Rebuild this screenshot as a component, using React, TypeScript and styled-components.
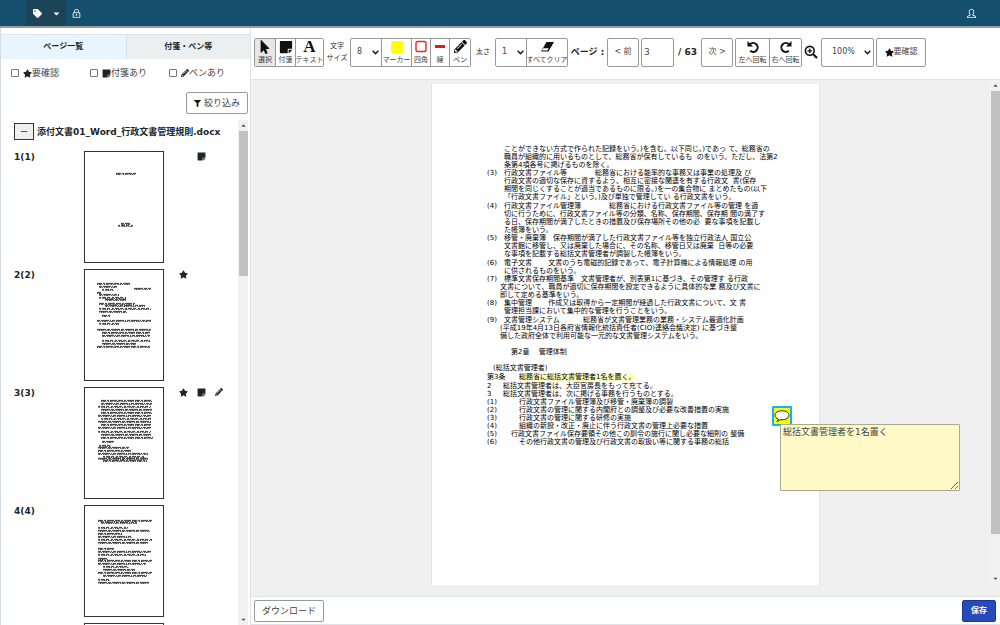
import React from 'react';
import styled, { createGlobalStyle } from 'styled-components';
import {
  FaTag,
  FaCaretDown,
  FaCaretUp,
  FaStar,
  FaStickyNote,
  FaPencilAlt,
  FaFilter,
  FaMousePointer,
} from 'react-icons/fa';
import { SlLock, SlUser } from 'react-icons/sl';

const GlobalStyle = createGlobalStyle`
  *, *::before, *::after { box-sizing: border-box; }
  body {
    margin: 0;
    background: #fff;
    color: #212529;
    font-family: "DejaVu Sans", "Noto Sans CJK JP", sans-serif;
    font-size: 9px;
    line-height: 12px;
  }
  button, input, select, textarea { font: inherit; color: inherit; margin: 0; }
  button { cursor: pointer; white-space: nowrap; }
  svg { display: block; flex: none; }
`;

const Shell = styled.div`
  height: 100vh;
  display: flex;
  flex-direction: column;
`;

const Header = styled.header`
  display: flex;
  align-items: stretch;
  flex: none;
  height: 28px;
  padding: 0 24px 0 26px;
  background: #154f6e;
  border-bottom: 2px solid #9d9c9b;
  color: #fff;
`;

const TagMenu = styled.button`
  display: flex;
  align-items: center;
  justify-content: space-between;
  width: 40px;
  padding: 0 5px 0 7px;
  border: 0;
  background: #1c4457;
  color: #fff;
`;

const HeaderButton = styled.button<{ $end?: boolean }>`
  display: flex;
  align-items: center;
  padding: 0 0 0 6px;
  margin-left: ${(p) => (p.$end ? 'auto' : 0)};
  border: 0;
  background: none;
  color: #fff;

  svg { stroke: #fff; stroke-width: 30px; }
`;

const Body = styled.div`
  flex: 1;
  min-height: 0;
  display: grid;
  grid-template-columns: 250px minmax(0, 1fr);
`;

const Sidebar = styled.aside`
  display: flex;
  flex-direction: column;
  min-height: 0;
  padding-top: 6px;
  border-left: 1px solid #d3dde2;
`;

const Tabs = styled.div`
  display: grid;
  grid-template-columns: 1fr 1fr;
  flex: none;
`;

const Tab = styled.button<{ $active?: boolean }>`
  height: 25px;
  padding: 0;
  border: 0;
  border-top: 1px solid #dfe6ea;
  border-left: ${(p) => (p.$active ? '0' : '1px solid #d5dfe5')};
  background: ${(p) => (p.$active ? '#e8f5fe' : '#ebeff0')};
  font-size: 8px;
  font-weight: 700;
`;

const Filters = styled.div`
  display: grid;
  grid-template-columns: 79px 79px 1fr;
  padding: 8px 0 0 10px;
`;

const Check = styled.label`
  display: flex;
  align-items: center;
  color: #444;

  svg { color: #222; }
`;

const CheckBox = styled.input`
  appearance: none;
  width: 8px;
  height: 8px;
  margin-right: 4px;
  border: 1px solid #777;
  border-radius: 1px;
  background: #fff;
`;

const FilterRow = styled.div`
  display: flex;
  justify-content: flex-end;
  padding: 13px 2px 6px 0;
`;

const OutlineButton = styled.button`
  display: flex;
  align-items: center;
  justify-content: center;
  gap: 3px;
  height: 22px;
  padding: 0 7px;
  border: 1px solid #999;
  border-radius: 2px;
  background: #fff;
  color: #444;
`;

const TreeArea = styled.div`
  flex: 1;
  min-height: 0;
  display: flex;
  overflow: hidden;
`;

const Tree = styled.div`
  flex: 1;
  min-width: 0;
  padding: 3px 0 0 13px;
`;

const FileRow = styled.div`
  display: flex;
  align-items: center;
  gap: 3px;
  height: 17px;
  margin-bottom: 11px;
  font-weight: 700;
  white-space: nowrap;
`;

const Collapse = styled.button`
  width: 20px;
  height: 17px;
  padding: 0;
  border: 1px solid #333;
  background: #efefef;
  line-height: 12px;
  color: #555;
`;

const PageList = styled.ol`
  display: flex;
  flex-direction: column;
  gap: 6px;
  margin: 0;
  padding: 0;
  list-style: none;
`;

const PageItem = styled.li`
  display: grid;
  grid-template-columns: 70px 80px 1fr;
  font-weight: 700;
`;

const Marks = styled.div`
  display: grid;
  grid-template-columns: repeat(3, 18px);
  justify-items: center;
  align-items: start;
  height: 12px;
  padding: 1px 0 0 10px;
`;

const Mark = styled.span<{ $col: number }>`
  grid-column: ${(p) => p.$col};
  grid-row: 1;
`;

const ThumbButton = styled.button`
  width: 80px;
  height: 112px;
  padding: 0;
  border: 1px solid #333;
  background: #fff;
`;

const Bar = styled.div`
  display: flex;
  flex-direction: column;
  align-items: center;
  width: 10px;
  flex: none;
  background: #f1f1f1;
  color: #555;
`;

const SideBar = styled(Bar)`
  margin-right: 2px;
`;

const CanvasBar = styled(Bar)`
  margin-bottom: 12px;
`;

const BarArrow = styled.div`
  flex: none;
  height: 11px;
  display: flex;
  align-items: center;
`;

const BarTrack = styled.div`
  flex: 1;
  min-height: 0;
  width: 9px;
`;

const BarThumb = styled.div<{ $share: number }>`
  height: ${(p) => p.$share}%;
  background: #c1c1c1;
`;

const Main = styled.main`
  display: flex;
  flex-direction: column;
  min-width: 0;
  min-height: 0;
  border-left: 1px solid #dfe3e6;
`;

const Toolbar = styled.div`
  display: flex;
  align-items: center;
  gap: 2px;
  flex: none;
  height: 52px;
  padding: 0 3px 3px;
  border-bottom: 1px solid #e2e2e2;
`;

const Group = styled.div`
  display: flex;
  flex: none;
  height: 29px;
  border: 1px solid #999;
  border-radius: 2px;
  overflow: hidden;
`;

const Tool = styled.button<{ $w: number; $active?: boolean }>`
  display: flex;
  flex-direction: column;
  align-items: center;
  justify-content: space-between;
  width: ${(p) => p.$w}px;
  padding: 1px 0;
  border: 0;
  border-left: 1px solid #999;
  background: ${(p) => (p.$active ? '#e6e6e6' : '#fff')};
  color: #111;
  font-size: 7px;
  line-height: 10px;

  &:first-child { border-left: 0; }
`;

const ToolText = styled.span`
  color: #444;
`;

const LetterIcon = styled.span`
  font-family: "Liberation Serif", serif;
  font-size: 17px;
  font-weight: 700;
  line-height: 14px;
`;

const SmallLabel = styled.label<{ $w: number }>`
  width: ${(p) => p.$w}px;
  flex: none;
  text-align: center;
  font-size: 7px;
  line-height: 12px;
  color: #333;
`;

const StrongLabel = styled.label<{ $w: number }>`
  width: ${(p) => p.$w}px;
  flex: none;
  font-weight: 700;
  text-align: center;
  white-space: nowrap;
`;

const SelectWrap = styled.div<{ $w: number; $framed?: boolean }>`
  display: grid;
  align-items: center;
  flex: none;
  width: ${(p) => p.$w}px;
  height: ${(p) => (p.$framed ? '29px' : 'auto')};
  border: ${(p) => (p.$framed ? '1px solid #999' : '0')};
  border-radius: 2px;

  > * { grid-area: 1 / 1; }
  > svg { justify-self: end; margin-right: 2px; pointer-events: none; }
`;

const Select = styled.select<{ $pad: number }>`
  appearance: none;
  width: 100%;
  height: 100%;
  padding: 0 0 0 ${(p) => p.$pad}px;
  border: 0;
  background: none;
  color: #444;
  font-size: 8px;
`;

const BarButton = styled.button<{ $w: number }>`
  display: flex;
  align-items: center;
  justify-content: center;
  flex: none;
  width: ${(p) => p.$w}px;
  height: 29px;
  padding: 0;
  border: 1px solid #999;
  border-radius: 2px;
  background: #fff;
  color: #444;
  font-size: 8px;

  svg { color: #111; }
`;

const PageInput = styled.input`
  flex: none;
  width: 33px;
  height: 29px;
  padding: 0 0 0 2px;
  border: 1px solid #999;
  border-radius: 2px;
  color: #444;
`;

const ZoomButton = styled.button`
  width: 15px;
  padding: 0;
  border: 0;
  background: none;
`;

const Canvas = styled.div`
  flex: 1;
  min-height: 0;
  display: flex;
  justify-content: space-between;
  background: #f0f0f0;
`;

const Stage = styled.div`
  flex: 1;
  min-width: 0;
  display: flex;
  justify-content: center;
  align-items: flex-start;
  padding: 4px 0 12px 10px;
`;

const Sheet = styled.article`
  position: relative;
  flex: none;
  width: 389px;
  min-height: 501px;
  padding: 61px 0 0 55px;
  border: solid #e3e3e3;
  border-width: 0 1px;
  background: #fff;
  color: #000;
  font-size: 7px;
  line-height: 8px;
  white-space: pre;
`;

const Sections = styled.div`
  display: flex;
  flex-direction: column;
  gap: 1px;
`;

const Clause = styled.div`
  display: grid;
  grid-template-columns: 17px 1fr;
`;

const ClauseText = styled.div<{ $wide?: boolean }>`
  grid-column: 2;
  margin-left: ${(p) => (p.$wide ? '-4px' : '0')};
`;

const Chapter = styled.h2`
  margin: 8px 0;
  padding-left: 24px;
  font: inherit;
`;

const Caption = styled.div`
  padding-left: 6px;
`;

const Highlight = styled.mark`
  background: #ffffc4;
  color: inherit;
`;

const Duty = styled.div<{ $col: number }>`
  display: grid;
  grid-template-columns: ${(p) => p.$col}px 1fr;
`;

const NoteMarker = styled.button`
  position: absolute;
  left: 340px;
  top: 322px;
  width: 20px;
  height: 20px;
  padding: 0;
  border: 2px solid #12b4f0;
  border-radius: 1px;
  background: #ff0;
`;

const NoteText = styled.textarea`
  position: absolute;
  left: 348px;
  top: 340px;
  width: 180px;
  height: 67px;
  padding: 1px 2px;
  border: 1px solid #aaa88f;
  border-radius: 1px;
  background: #fff9c8;
  color: #444;
  font-size: 9px;
  line-height: 12px;
  resize: both;
`;

const Footer = styled.footer`
  display: flex;
  align-items: center;
  justify-content: space-between;
  flex: none;
  height: 29px;
  padding: 0 4px 0 3px;
  border-top: 1px solid #dde3e8;
  border-bottom: 1px solid #dde3e8;
`;

const SaveButton = styled.button`
  width: 34px;
  height: 22px;
  padding: 0;
  border: 1px solid #1a37a0;
  border-radius: 2px;
  background: #2849b8;
  color: #fff;
  font-size: 8px;
  font-weight: 700;
`;

type Row = [x: number, y: number, w: number];

const thumbRows: Row[][] = [
  [[31, 22, 20], [36, 72, 9], [33, 74, 15]],
  [
    [12, 14, 33], [14, 17, 18], [17, 20, 12], [49, 19, 17], [12, 23, 4], [14, 25, 20], [14, 28, 27],
    [20, 30, 21], [14, 34, 36], [20, 36, 40], [14, 39, 52], [14, 42, 28], [17, 46, 8],
    [12, 51, 54], [14, 54, 20], [12, 60, 54], [17, 63, 48], [17, 66, 48], [17, 71, 48], [17, 74, 34],
    [12, 77, 53],
  ],
  [
    [16, 13, 51], [16, 16, 51], [13, 19, 53], [16, 22, 51], [16, 25, 51], [13, 28, 53], [16, 31, 51],
    [13, 34, 53], [16, 37, 50], [13, 40, 53], [13, 44, 53], [16, 47, 50], [16, 50, 52],
    [17, 54, 12], [14, 58, 12], [13, 60, 31], [13, 63, 34], [13, 66, 50], [18, 69, 42], [13, 71, 50], [18, 73, 44],
  ],
  [
    [13, 15, 54], [16, 17, 36], [13, 22, 30], [13, 25, 52], [13, 28, 24], [13, 31, 34], [13, 34, 54],
    [13, 37, 50], [13, 43, 16], [13, 46, 53], [13, 49, 48], [13, 53, 10], [13, 55, 54], [13, 58, 48],
    [18, 61, 26], [18, 64, 32], [13, 67, 54], [18, 70, 44], [13, 74, 12], [13, 77, 51],
  ],
  [],
];

const dashes = ['5 1 2 1 7 1', '3 1 8 1 1 1', '2 1 4 1 3 2', '9 1 3 1'];

function Thumb({ rows }: { rows: Row[] }) {
  return (
    <svg width="78" height="110" viewBox="0 0 78 110" aria-hidden="true">
      {rows.map(([x, y, w], i) => (
        <g key={i} stroke="#222" fill="none">
          <path d={`M${x} ${y - 0.6}h${w}`} strokeWidth="0.9" strokeDasharray={dashes[i % 4]} />
          <path
            d={`M${x} ${y + 0.4}h${w}`}
            strokeWidth="0.9"
            strokeDasharray="1.3 0.7 2 0.6 1 1.2"
            strokeDashoffset={i * 1.7}
          />
        </g>
      ))}
    </svg>
  );
}

const pages = [
  { label: '1(1)', marks: ['note'] },
  { label: '2(2)', marks: ['star'] },
  { label: '3(3)', marks: ['star', 'note', 'pen'] },
  { label: '4(4)', marks: [] },
  { label: '', marks: [] },
];

type ClauseData = { no?: string; first?: string; wide?: boolean; lines: string[] };

const sections: ClauseData[][] = [
  [
    {
      lines: [
        'ことができない方式で作られた記録をいう。)を含む。以下同じ。)であっ て、総務省の',
        '職員が組織的に用いるものとして、総務省が保有しているも  のをいう。ただし、法第2',
        '条第4項各号に掲げるものを除く。',
      ],
    },
    {
      no: '(3)',
      first: '行政文書ファイル等　　　　総務省における能率的な事務又は事業の処理及 び',
      lines: [
        '行政文書の適切な保存に資するよう、相互に密接な関連を有する行政文  書(保存',
        '期間を同じくすることが適当であるものに限る。)を一の集合物に まとめたもの(以下',
        '「行政文書ファイル」という。)及び単独で管理してい る行政文書をいう。',
      ],
    },
  ],
  [
    {
      no: '(4)',
      first: '行政文書ファイル管理簿　　　　総務省における行政文書ファイル等の管理 を適',
      lines: [
        '切に行うために、行政文書ファイル等の分類、名称、保存期間、保存期 間の満了す',
        'る日、保存期間が満了したときの措置及び保存場所その他の必  要な事項を記載し',
        'た帳簿をいう。',
      ],
    },
    {
      no: '(5)',
      first: '移管・廃棄簿　保存期間が満了した行政文書ファイル等を独立行政法人 国立公',
      lines: [
        '文書館に移管し、又は廃棄した場合に、その名称、移管日又は廃棄  日等の必要',
        'な事項を記載する総括文書管理者が調製した帳簿をいう。',
      ],
    },
  ],
  [
    {
      no: '(6)',
      first: '電子文書　　 文書のうち電磁的記録であって、電子計算機による情報処理 の用',
      lines: ['に供されるものをいう。'],
    },
    {
      no: '(7)',
      first: '標準文書保存期間基準　文書管理者が、別表第1に基づき、その管理す る行政',
      wide: true,
      lines: [
        '文書について、職員が適切に保存期間を設定できるように具体的な業 務及び文書に',
        '即して定める基準をいう。',
      ],
    },
    {
      no: '(8)',
      first: '集中管理　　 作成又は取得から一定期間が経過した行政文書について、文 書',
      lines: ['管理担当課において集中的な管理を行うことをいう。'],
    },
  ],
  [
    {
      no: '(9)',
      first: '文書管理システム　　　 総務省が文書管理業務の業務・システム最適化計画',
      wide: true,
      lines: [
        '(平成19年4月13日各府省情報化統括責任者(CIO)連絡会議決定) に基づき整',
        '備した政府全体で利用可能な一元的な文書管理システムをいう。',
      ],
    },
  ],
];

const duties: [string, string, number][] = [
  ['(1)', '行政文書ファイル管理簿及び移管・廃棄簿の調製', 32],
  ['(2)', '行政文書の管理に関する内閣府との調整及び必要な改善措置の実施', 32],
  ['(3)', '行政文書の管理に関する研修の実施', 32],
  ['(4)', '組織の新設・改正・廃止に伴う行政文書の管理上必要な措置', 32],
  ['(5)', '行政文書ファイル保存要領その他この訓令の施行に関し必要な細則の 整備', 24],
  ['(6)', 'その他行政文書の管理及び行政文書の取扱い等に関する事務の総括', 32],
];

function Chevron() {
  return (
    <svg width="7" height="5" viewBox="0 0 7 5" fill="none" stroke="#111" strokeWidth="1.4" aria-hidden="true">
      <path d="M0.7 0.8 3.5 3.8 6.3 0.8" />
    </svg>
  );
}

function ZoomIcon() {
  return (
    <svg width="14" height="14" viewBox="0 0 14 14" fill="none" stroke="#111" aria-hidden="true">
      <circle cx="5.8" cy="5.8" r="4.4" strokeWidth="1.6" />
      <path d="M9.2 9.2 13 13" strokeWidth="2.2" />
      <path d="M3.5 5.8h4.6M5.8 3.5v4.6" strokeWidth="1.3" />
    </svg>
  );
}

function RotateIcon({ flip }: { flip?: boolean }) {
  return (
    <svg width="14" height="14" viewBox="0 0 14 14" aria-hidden="true">
      <g transform={flip ? 'matrix(-1 0 0 1 14 0)' : undefined}>
        <path d="M4 4.200A4.500 4.500 0 1 1 4.200 10.800" fill="none" stroke="#111" strokeWidth="2" />
        <path d="M1.500 1v5.500H7z" fill="#111" />
      </g>
    </svg>
  );
}

function EraserIcon() {
  return (
    <svg width="15" height="14" viewBox="0 0 15 14" aria-hidden="true">
      <path d="M6.500 2h7.500L8.500 11.500H1z" fill="#111" />
      <path d="M3.300 8.300h5.400l-1.200 2.100H2.100z" fill="#fff" />
    </svg>
  );
}

function Scroll({ share }: { share: number }) {
  return (
    <>
      <BarArrow><FaCaretUp size={7} /></BarArrow>
      <BarTrack><BarThumb $share={share} /></BarTrack>
      <BarArrow><FaCaretDown size={7} /></BarArrow>
    </>
  );
}

export default function App() {
  return (
    <Shell lang="ja">
      <GlobalStyle />
      <Header>
        <TagMenu aria-label="タグ">
          <FaTag size={9} />
          <FaCaretDown size={9} />
        </TagMenu>
        <HeaderButton aria-label="ロック"><SlLock size={9} /></HeaderButton>
        <HeaderButton $end aria-label="ユーザー"><SlUser size={9} /></HeaderButton>
      </Header>

      <Body>
        <Sidebar>
          <Tabs role="tablist">
            <Tab $active role="tab" aria-selected="true">ページ一覧</Tab>
            <Tab role="tab" aria-selected="false">付箋・ペン等</Tab>
          </Tabs>
          <Filters>
            <Check><CheckBox type="checkbox" /><FaStar size={9} />要確認</Check>
            <Check><CheckBox type="checkbox" /><FaStickyNote size={9} />付箋あり</Check>
            <Check><CheckBox type="checkbox" /><FaPencilAlt size={8} />ペンあり</Check>
          </Filters>
          <FilterRow>
            <OutlineButton><FaFilter size={7} color="#111" />絞り込み</OutlineButton>
          </FilterRow>
          <TreeArea>
            <Tree>
              <FileRow>
                <Collapse aria-label="折りたたむ">－</Collapse>
                <span>添付文書01_Word_行政文書管理規則.docx</span>
              </FileRow>
              <PageList>
                {pages.map((page, i) => (
                  <PageItem key={i}>
                    <span>{page.label}</span>
                    <ThumbButton aria-label={`${i + 1}ページ`}><Thumb rows={thumbRows[i]} /></ThumbButton>
                    <Marks>
                      {page.marks.includes('star') && <Mark $col={1}><FaStar size={9} /></Mark>}
                      {page.marks.includes('note') && <Mark $col={2}><FaStickyNote size={9} /></Mark>}
                      {page.marks.includes('pen') && <Mark $col={3}><FaPencilAlt size={8} /></Mark>}
                    </Marks>
                  </PageItem>
                ))}
              </PageList>
            </Tree>
            <SideBar><Scroll share={30} /></SideBar>
          </TreeArea>
        </Sidebar>

        <Main>
          <Toolbar>
            <Group>
              <Tool $w={20} $active><FaMousePointer size={14} /><ToolText>選択</ToolText></Tool>
              <Tool $w={20}><FaStickyNote size={14} /><ToolText>付箋</ToolText></Tool>
              <Tool $w={28}><LetterIcon aria-hidden="true">A</LetterIcon><ToolText>テキスト</ToolText></Tool>
            </Group>
            <SmallLabel htmlFor="font-size" $w={22}>文字<br />サイズ</SmallLabel>
            <Group>
              <SelectWrap $w={30}>
                <Select id="font-size" $pad={6} defaultValue="8"><option>8</option><option>10</option></Select>
                <Chevron />
              </SelectWrap>
              <Tool $w={30}>
                <svg width="12" height="13" viewBox="0 0 12 13"><rect y="1" width="12" height="12" rx="1.5" fill="#ff0" /></svg>
                <ToolText>マーカー</ToolText>
              </Tool>
              <Tool $w={19}>
                <svg width="12" height="13" viewBox="0 0 12 13">
                  <rect x="1" y="1.500" width="10" height="10" rx="1.5" fill="none" stroke="#ee2020" strokeWidth="1.4" />
                </svg>
                <ToolText>四角</ToolText>
              </Tool>
              <Tool $w={19}>
                <svg width="12" height="13" viewBox="0 0 12 13"><path d="M1 6.500h10" stroke="#ee1515" strokeWidth="3" /></svg>
                <ToolText>線</ToolText>
              </Tool>
              <Tool $w={21}><FaPencilAlt size={13} /><ToolText>ペン</ToolText></Tool>
            </Group>
            <SmallLabel htmlFor="stroke" $w={20}>太さ</SmallLabel>
            <Group>
              <SelectWrap $w={30}>
                <Select id="stroke" $pad={6} defaultValue="1"><option>1</option><option>2</option></Select>
                <Chevron />
              </SelectWrap>
              <Tool $w={41}><EraserIcon /><ToolText>すべてクリア</ToolText></Tool>
            </Group>
            <StrongLabel htmlFor="page-no" $w={35}>ページ :</StrongLabel>
            <BarButton $w={32}>&lt; 前</BarButton>
            <PageInput id="page-no" defaultValue="3" />
            <StrongLabel as="span" $w={23}>/ 63</StrongLabel>
            <BarButton $w={32}>次 &gt;</BarButton>
            <Group>
              <Tool $w={33}><RotateIcon /><ToolText>左へ回転</ToolText></Tool>
              <Tool $w={32}><RotateIcon flip /><ToolText>右へ回転</ToolText></Tool>
            </Group>
            <ZoomButton aria-label="拡大"><ZoomIcon /></ZoomButton>
            <SelectWrap $w={53} $framed>
              <Select aria-label="表示倍率" $pad={10} defaultValue="100%"><option>100%</option><option>150%</option></Select>
              <Chevron />
            </SelectWrap>
            <BarButton $w={50}><FaStar size={9} />要確認</BarButton>
          </Toolbar>

          <Canvas>
            <Stage>
              <Sheet>
                <Sections>
                  {sections.map((section, s) => (
                    <div key={s}>
                      {section.map((c, i) => (
                        <Clause key={i}>
                          {c.no && <span>{c.no}</span>}
                          {c.first && <ClauseText>{c.first}</ClauseText>}
                          <ClauseText $wide={c.wide}>{c.lines.join('\n')}</ClauseText>
                        </Clause>
                      ))}
                    </div>
                  ))}
                </Sections>
                <Chapter>第2章　 管理体制</Chapter>
                <Sections>
                  <Caption>(総括文書管理者)</Caption>
                  <Duty $col={32}><span>第3条</span><span><Highlight>総務省に総括文書管理者1名を置く。</Highlight></span></Duty>
                  <div>
                    <Duty $col={16}><span>2</span><span>総括文書管理者は、大臣官房長をもって充てる。</span></Duty>
                    <Duty $col={16}><span>3</span><span>総括文書管理者は、次に掲げる事務を行うものとする。</span></Duty>
                    {duties.map(([no, text, col]) => (
                      <Duty key={no} $col={col}><span>{no}</span><span>{text}</span></Duty>
                    ))}
                  </div>
                </Sections>
                <NoteMarker aria-label="付箋">
                  <svg width="16" height="16" viewBox="0 0 16 16" aria-hidden="true">
                    <path
                      d="M4.6 11.2C2.2 10.4 1 8.9 1 7.2 1 4.600 4 2.800 8 2.800s7 1.800 7 4.400-3 4.600-7 4.600c-.6 0-1.200 0-1.800-.1-.8.8-1.900 1.400-3.400 1.600.8-.6 1.500-1.300 1.800-2.100z"
                      fill="#fff"
                      stroke="#222"
                      strokeWidth="1"
                    />
                  </svg>
                </NoteMarker>
                <NoteText aria-label="付箋の内容" defaultValue="総括文書管理者を1名置く" />
              </Sheet>
            </Stage>
            <CanvasBar><Scroll share={92} /></CanvasBar>
          </Canvas>

          <Footer>
            <OutlineButton>ダウンロード</OutlineButton>
            <SaveButton>保存</SaveButton>
          </Footer>
        </Main>
      </Body>
    </Shell>
  );
}
